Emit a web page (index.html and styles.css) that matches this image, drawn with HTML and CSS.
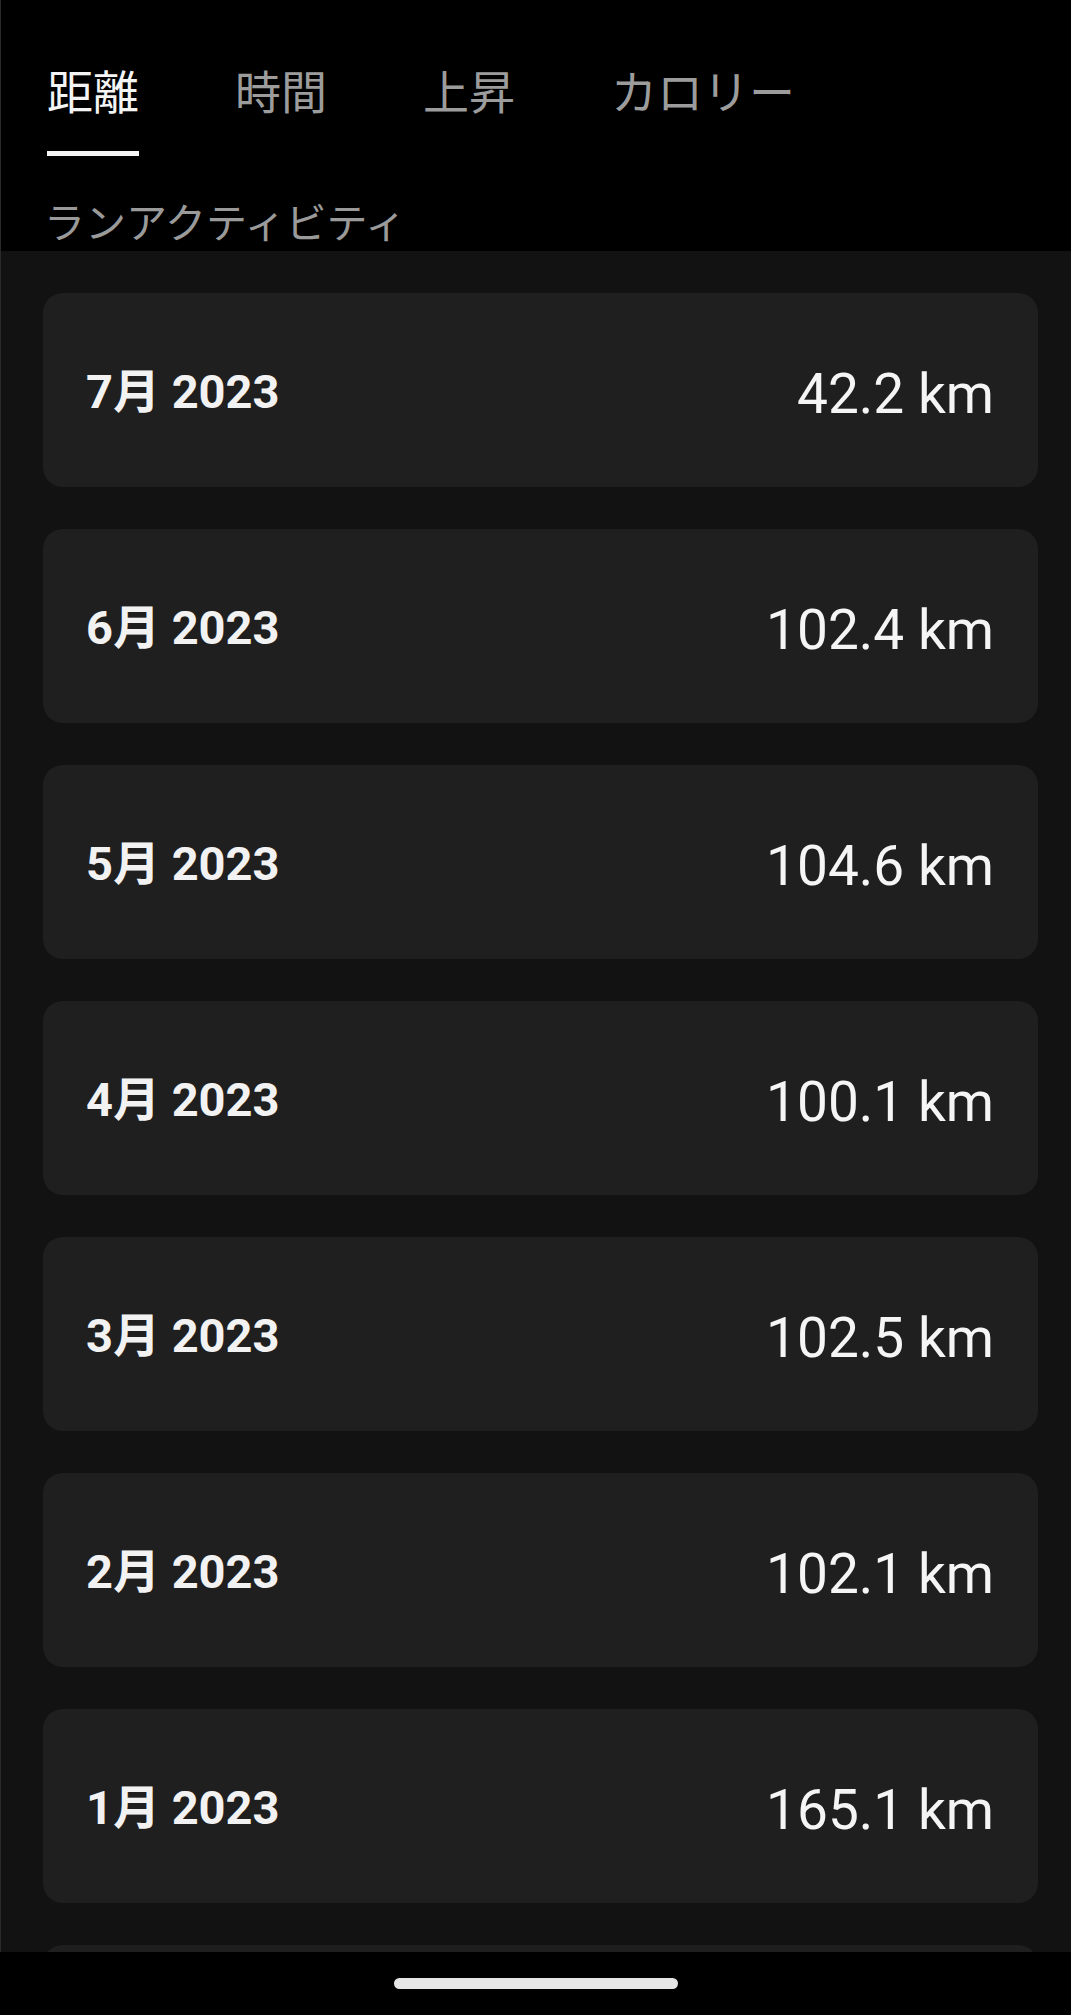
FILE: index.html
```html
<!DOCTYPE html>
<html lang="ja">
<head>
    <meta charset="UTF-8">
    <meta name="viewport" content="width=device-width, initial-scale=1.0">
    <title>ランアクティビティ</title>
    <link rel="stylesheet" href="styles.css">
</head>
<body>
    <div class="screen">
        <header class="header">
            <nav class="tabs">
                <div class="tab active">距離</div>
                <div class="tab">時間</div>
                <div class="tab">上昇</div>
                <div class="tab">カロリー</div>
            </nav>
            <div class="subtitle">ランアクティビティ</div>
        </header>

        <main class="month-list">
            <div class="month-card">
                <span class="month">7月 2023</span>
                <span class="value">42.2 km</span>
            </div>
            <div class="month-card">
                <span class="month">6月 2023</span>
                <span class="value">102.4 km</span>
            </div>
            <div class="month-card">
                <span class="month">5月 2023</span>
                <span class="value">104.6 km</span>
            </div>
            <div class="month-card">
                <span class="month">4月 2023</span>
                <span class="value">100.1 km</span>
            </div>
            <div class="month-card">
                <span class="month">3月 2023</span>
                <span class="value">102.5 km</span>
            </div>
            <div class="month-card">
                <span class="month">2月 2023</span>
                <span class="value">102.1 km</span>
            </div>
            <div class="month-card">
                <span class="month">1月 2023</span>
                <span class="value">165.1 km</span>
            </div>
            <!-- next month, scrolled under the nav bar -->
            <div class="month-card"></div>
        </main>

        <footer class="nav-bar">
            <div class="home-handle"></div>
        </footer>
    </div>
</body>
</html>
```

FILE: styles.css
```css
body {
    margin: 0;
    background: #000;
    font-family: Roboto, "Noto Sans CJK JP", sans-serif;
    color: #f2f2f2;
}
.screen {
    display: flex;
    flex-direction: column;
    width: 1071px;
    height: 2015px;
    overflow: hidden;
}
.header {
    flex: none;
    height: 251px;
    box-sizing: border-box;
    padding: 65px 0 0 46px;
    background: #000;
    border-left: 1px solid #2a2a2a;
}
.tabs {
    display: flex;
    gap: 96px;
}
.tab {
    font-size: 46px;
    line-height: 56px;
    color: #9c9c9c;
    padding-bottom: 30px;
    border-bottom: 5px solid transparent;
}
.tab.active {
    color: #f4f4f4;
    border-bottom-color: #f4f4f4;
}
.subtitle {
    margin: 45px 0 0 -3px;
    font-size: 41px;
    line-height: 46px;
    color: #9a9a9a;
}
.month-list {
    flex: none;
    height: 1701px;
    box-sizing: border-box;
    overflow: hidden;
    display: flex;
    flex-direction: column;
    gap: 42px;
    padding: 42px 33px 0 42px;
    background: #121212;
    border-left: 1px solid #2a2a2a;
}
.month-card {
    flex: none;
    display: flex;
    align-items: center;
    justify-content: space-between;
    height: 194px;
    padding: 0 44px 0 43px;
    background: #1f1f1f;
    border-radius: 20px;
}
.month {
    font-size: 47px;
    line-height: 1;
    font-weight: 700;
    color: #f2f2f2;
    margin-top: 2px;
}
.value {
    font-size: 55px;
    line-height: 1;
    color: #f5f5f5;
    margin-top: 8px;
}
.nav-bar {
    flex: none;
    height: 63px;
    display: flex;
    justify-content: center;
    padding-top: 26px;
    box-sizing: border-box;
    background: #000;
}
.home-handle {
    width: 284px;
    height: 11px;
    border-radius: 6px;
    background: #e6e6e6;
}
```
